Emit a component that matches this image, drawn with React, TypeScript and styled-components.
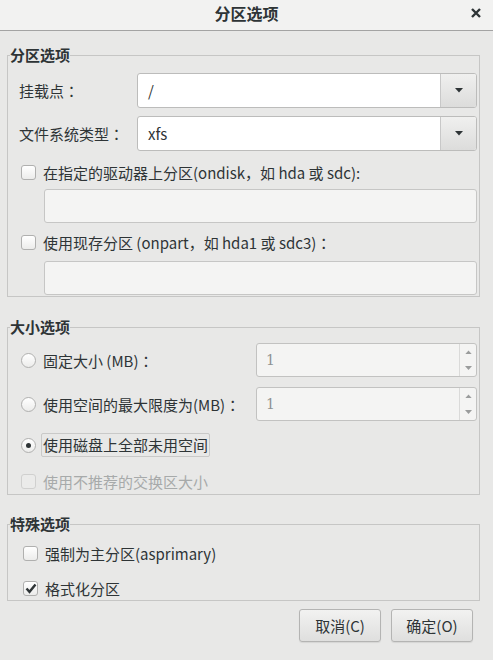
import React, { FC } from 'react'
import styled, { createGlobalStyle } from 'styled-components'

const GlobalStyle = createGlobalStyle`
    html, body {
        margin: 0;
        padding: 0;
        background: #e8e8e7;
    }
    body {
        font-family: "Noto Sans CJK SC", "Noto Sans", sans-serif;
        color: #2e3436;
    }
`

const Window = styled.div`
    width: 493px;
    height: 660px;
    background: #e8e8e7;
    display: flex;
    flex-direction: column;
    overflow: hidden;
`

const TitleBar = styled.div`
    height: 30px;
    background: #f2f2f1;
    border-bottom: 1px solid #a3a3a3;
    display: grid;
    grid-template-columns: 1fr auto 1fr;
    align-items: start;
    h1 {
        margin: 0;
        font-size: 16px;
        font-weight: bold;
        line-height: 26px;
    }
`

const CloseBtn = styled.div`
    justify-self: end;
    margin: 7px 11px 0 0;
    width: 12px;
    height: 12px;
    display: flex;
`

const Content = styled.div`
    padding: 0 13px 0 7px;
    display: flex;
    flex-direction: column;
`

const Frame = styled.fieldset<{ $top: number }>`
    margin: ${p => p.$top}px 0 0 0;
    padding: 0;
    min-width: 0;
    border: 1px solid #c6c6c5;
    legend {
        margin-left: 2px;
        padding: 0;
        font-size: 15px;
        font-weight: bold;
        line-height: 20px;
    }
`

const FrameBody = styled.div<{ $pt: number; $pb: number }>`
    display: flex;
    flex-direction: column;
    padding: ${p => p.$pt}px 2px ${p => p.$pb}px 11px;
`

const FieldRow = styled.div<{ $mt?: number }>`
    display: flex;
    align-items: center;
    margin-top: ${p => p.$mt ?? 0}px;
`

const FieldLabel = styled.span<{ $w: number }>`
    width: ${p => p.$w}px;
    flex: none;
    font-size: 15px;
    white-space: nowrap;
`

// full-width colon drawn centred in its cell, as in the reference
const Colon = styled.span`
    font-family: "Noto Sans CJK TC", "Noto Sans CJK SC", sans-serif;
`

const Combo = styled.div`
    flex: 1;
    height: 35px;
    display: flex;
    border: 1px solid #bcbcbb;
    border-radius: 3px;
    background: #fff;
    box-sizing: border-box;
    overflow: hidden;
    span {
        flex: 1;
        padding-left: 10px;
        font-size: 15px;
        line-height: 33px;
    }
`

const ComboButton = styled.div`
    width: 35px;
    border-left: 1px solid #c8c8c8;
    background: linear-gradient(#f0f0ef, #dcdcdb);
    display: flex;
    align-items: center;
    justify-content: center;
`

const Spin = styled.div`
    flex: 1;
    height: 34px;
    display: flex;
    border: 1px solid #c2c2c1;
    border-radius: 3px;
    background: #f4f4f3;
    box-sizing: border-box;
    span {
        flex: 1;
        padding-left: 9px;
        font-family: "DejaVu Serif", serif;
        font-size: 14px;
        color: #8f9292;
        line-height: 32px;
    }
`

const SpinButtons = styled.div`
    width: 16px;
    border-left: 1px solid #dadad9;
    display: flex;
    flex-direction: column;
    div {
        flex: 1;
        display: flex;
        align-items: center;
        justify-content: center;
    }
`

const CheckRow = styled.label<{ $mt?: number; $disabled?: boolean; $ml?: number }>`
    display: flex;
    align-items: center;
    gap: 7px;
    height: 22px;
    margin-top: ${p => p.$mt ?? 0}px;
    margin-left: ${p => p.$ml ?? 2}px;
    font-size: 15px;
    white-space: nowrap;
    color: ${p => (p.$disabled ? '#a7aaaa' : '#2e3436')};
`

const Box = styled.span<{ $disabled?: boolean }>`
    width: 15px;
    height: 15px;
    box-sizing: border-box;
    flex: none;
    border: 1px solid ${p => (p.$disabled ? '#d0d0cf' : '#b0b0af')};
    border-radius: 3px;
    background: ${p => (p.$disabled ? '#ebebea' : 'linear-gradient(#ffffff, #ececeb)')};
    display: flex;
    align-items: center;
    justify-content: center;
`

const Radio = styled.span`
    width: 15px;
    height: 15px;
    box-sizing: border-box;
    flex: none;
    border: 1px solid #b0b0af;
    border-radius: 50%;
    background: linear-gradient(#ffffff, #ececeb);
    display: flex;
    align-items: center;
    justify-content: center;
    i {
        width: 5px;
        height: 5px;
        border-radius: 50%;
        background: #2e3436;
    }
`

const FocusText = styled.span`
    border: 1px solid #c9c9c8;
    border-radius: 2px;
    padding: 0 1px;
    margin-left: -2px;
    line-height: 22px;
`

const Entry = styled.div<{ $mt: number }>`
    margin: ${p => p.$mt}px 0 0 25px;
    height: 34px;
    box-sizing: border-box;
    border: 1px solid #c6c6c5;
    border-radius: 3px;
    background: #f4f4f3;
`

const SizeRow = styled.div<{ $mt?: number }>`
    display: flex;
    align-items: center;
    margin-top: ${p => p.$mt ?? 0}px;
    ${CheckRow} {
        width: 235px;
        flex: none;
    }
`

const ButtonBar = styled.div`
    display: flex;
    justify-content: flex-end;
    gap: 10px;
    margin-top: 8px;
    padding-right: 7px;
`

const Button = styled.button`
    width: 82px;
    height: 33px;
    border: 1px solid #b4b4b3;
    border-radius: 3px;
    background: linear-gradient(#f2f2f1, #dfdfde);
    box-shadow: 0 1px 1px rgba(0, 0, 0, 0.08);
    font-family: "Noto Sans CJK SC", "Noto Sans", sans-serif;
    font-size: 15px;
    color: #2e3436;
    padding: 0;
`

const Arrow: FC<{ up?: boolean; color?: string; w?: number }> = ({ up, color = '#2e3436', w = 8 }) => (
    <svg width={w} height={w / 2 + 1} viewBox="0 0 8 5">
        <path d={up ? 'M0 5 L4 0.5 L8 5 Z' : 'M0 0 L8 0 L4 4.5 Z'} fill={color} />
    </svg>
)

const Check = () => (
    <svg width="12" height="11" viewBox="0 0 12 11">
        <path d="M1.5 5.5 L4.5 8.8 L10.5 1.5" stroke="#2e3436" strokeWidth="2.4" fill="none" />
    </svg>
)

const SpinArrows = () => (
    <SpinButtons>
        <div><Arrow up color="#9a9c9c" w={7} /></div>
        <div><Arrow color="#9a9c9c" w={7} /></div>
    </SpinButtons>
)

const App: FC = () => {
    return <Window>
        <GlobalStyle />
        <TitleBar>
            <span />
            <h1>分区选项</h1>
            <CloseBtn>
                <svg width="12" height="12" viewBox="0 0 12 12">
                    <path d="M2 2 L10 10 M10 2 L2 10" stroke="#2e3436" strokeWidth="2.4" />
                </svg>
            </CloseBtn>
        </TitleBar>

        <Content>
            <Frame $top={14}>
                <legend>分区选项</legend>
                <FrameBody $pt={8} $pb={1}>
                    <FieldRow>
                        <FieldLabel $w={118}>挂载点<Colon>：</Colon></FieldLabel>
                        <Combo><span>/</span><ComboButton><Arrow /></ComboButton></Combo>
                    </FieldRow>
                    <FieldRow $mt={8}>
                        <FieldLabel $w={118}>文件系统类型<Colon>：</Colon></FieldLabel>
                        <Combo><span>xfs</span><ComboButton><Arrow /></ComboButton></Combo>
                    </FieldRow>
                    <CheckRow $mt={10}>
                        <Box />在指定的驱动器上分区(ondisk，如 hda 或 sdc):
                    </CheckRow>
                    <Entry $mt={6} />
                    <CheckRow $mt={8}>
                        <Box /><span>使用现存分区 (onpart，如 hda1 或 sdc3)<Colon>：</Colon></span>
                    </CheckRow>
                    <Entry $mt={8} />
                </FrameBody>
            </Frame>

            <Frame $top={20}>
                <legend>大小选项</legend>
                <FrameBody $pt={6} $pb={2}>
                    <SizeRow>
                        <CheckRow><Radio /><span>固定大小 (MB)<Colon>：</Colon></span></CheckRow>
                        <Spin><span>1</span><SpinArrows /></Spin>
                    </SizeRow>
                    <SizeRow $mt={10}>
                        <CheckRow><Radio /><span>使用空间的最大限度为(MB)<Colon>：</Colon></span></CheckRow>
                        <Spin><span>1</span><SpinArrows /></Spin>
                    </SizeRow>
                    <CheckRow $mt={13}>
                        <Radio><i /></Radio><FocusText>使用磁盘上全部未用空间</FocusText>
                    </CheckRow>
                    <CheckRow $mt={14} $disabled>
                        <Box $disabled />使用不推荐的交换区大小
                    </CheckRow>
                </FrameBody>
            </Frame>

            <Frame $top={19}>
                <legend>特殊选项</legend>
                <FrameBody $pt={8} $pb={1}>
                    <CheckRow $ml={4}>
                        <Box />强制为主分区(asprimary)
                    </CheckRow>
                    <CheckRow $mt={13} $ml={4}>
                        <Box><Check /></Box>格式化分区
                    </CheckRow>
                </FrameBody>
            </Frame>

            <ButtonBar>
                <Button>取消(C)</Button>
                <Button>确定(O)</Button>
            </ButtonBar>
        </Content>
    </Window>
}

export default App
